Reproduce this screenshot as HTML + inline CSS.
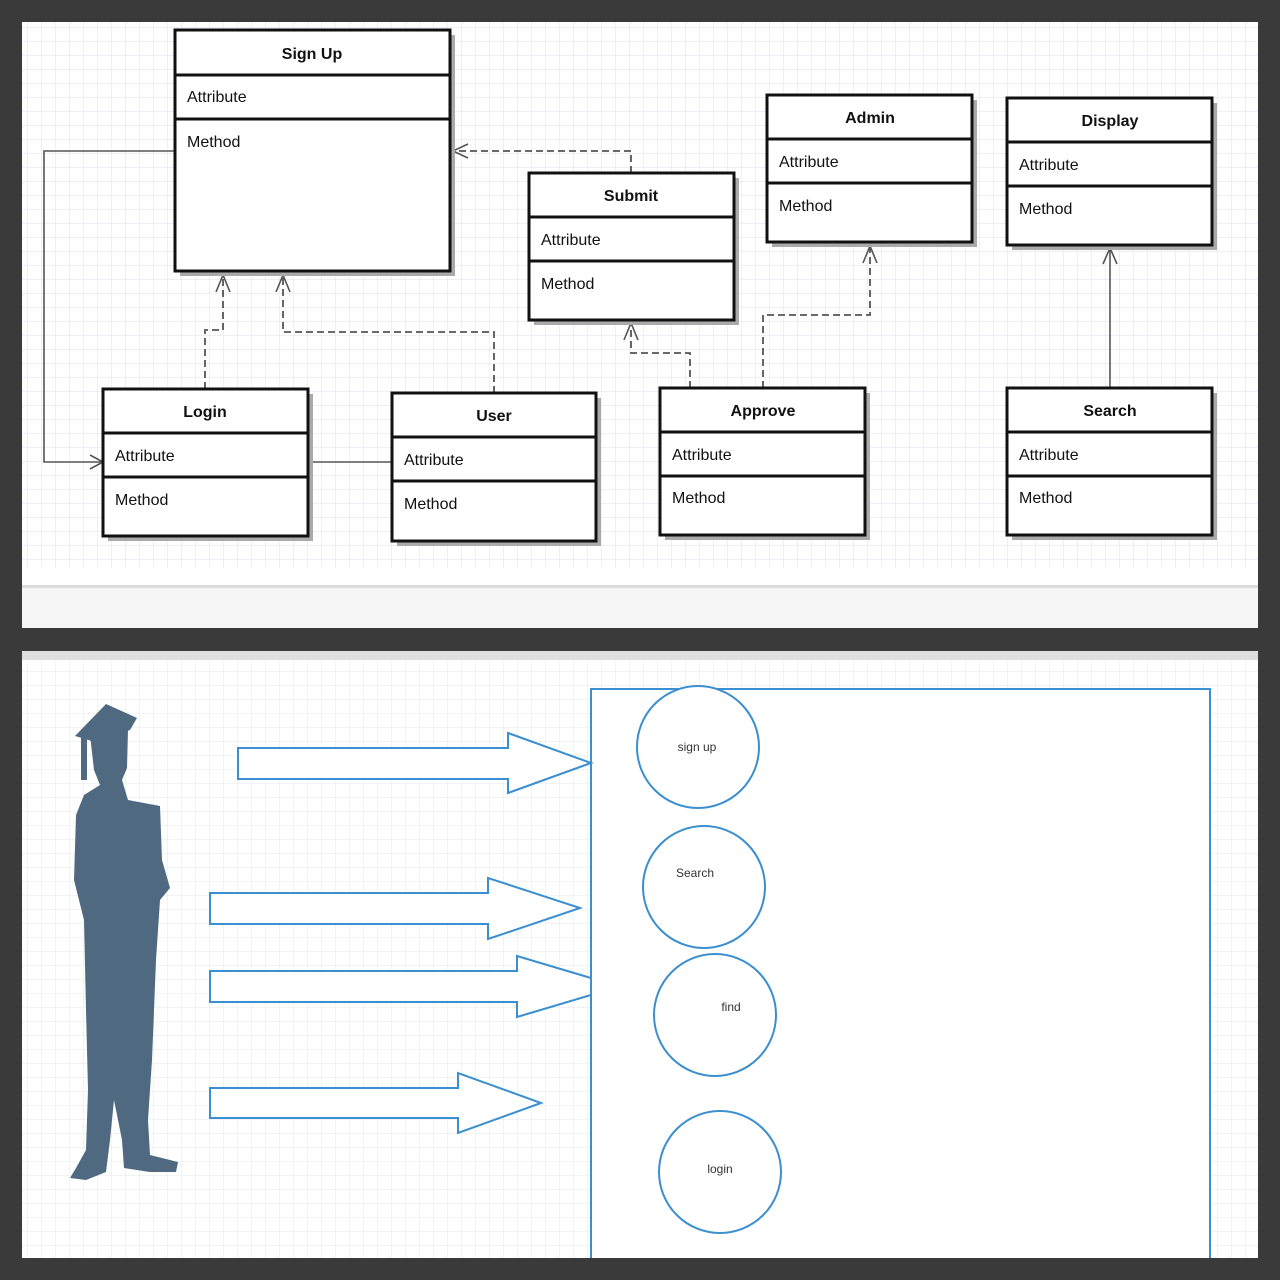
<!DOCTYPE html>
<html><head><meta charset="utf-8"><style>
html,body{margin:0;padding:0;background:#3a3a3a;}
svg{display:block;}
text{font-family:"Liberation Sans",sans-serif;}
</style></head><body>
<svg width="1280" height="1280" viewBox="0 0 1280 1280" xmlns="http://www.w3.org/2000/svg">
<defs>
<pattern id="g" width="14" height="14" patternUnits="userSpaceOnUse">
<rect width="14" height="14" fill="#fff"/>
<path d="M14 0V14M0 14H14" stroke="#dde1f0" stroke-width="1"/>
</pattern>
<pattern id="g2" width="14" height="14" patternUnits="userSpaceOnUse">
<rect width="14" height="14" fill="#fff"/>
<path d="M14 0V14M0 14H14" stroke="#e4e7ec" stroke-width="1"/>
</pattern>
<clipPath id="bp"><rect x="22" y="651" width="1236" height="607"/></clipPath>
</defs>
<rect width="1280" height="1280" fill="#3a3a3a"/>
<rect x="22" y="22" width="1236" height="606" fill="#fff"/>
<rect x="22" y="22" width="1236" height="546" fill="url(#g)"/>
<rect x="22" y="585" width="1236" height="3" fill="#dcdcdc"/>
<rect x="22" y="588" width="1236" height="40" fill="#f6f6f6"/>
<rect x="22" y="651" width="1236" height="607" fill="url(#g2)"/>
<rect x="22" y="651" width="1236" height="9" fill="#dedede"/>

<g fill="none" stroke="#555" stroke-width="1.6">
<path d="M175 151H44V462H103"/>
<path d="M90 455L103 462L90 469"/>
<path d="M308 462H392"/>
<path d="M1110 388V246"/>
<path d="M1103 264L1110 248L1117 264"/>
</g>
<g fill="none" stroke="#555" stroke-width="1.8" stroke-dasharray="7,4">
<path d="M631 173V151H453"/>
<path d="M205 389V330H223V274"/>
<path d="M494 393V332H283V274"/>
<path d="M690 388V353H631V322"/>
<path d="M763 388V315H870V245"/>
</g>
<g fill="none" stroke="#555" stroke-width="1.6">
<path d="M468 144L453 151L468 158"/>
<path d="M216 292L223 275L230 292"/>
<path d="M276 292L283 275L290 292"/>
<path d="M624 340L631 323L638 340"/>
<path d="M863 263L870 246L877 263"/>
</g>

<g fill="#aaa">
<rect x="180" y="35" width="275" height="241"/>
<rect x="534" y="178" width="205" height="147"/>
<rect x="772" y="100" width="205" height="147"/>
<rect x="1012" y="103" width="205" height="147"/>
<rect x="108" y="394" width="205" height="147"/>
<rect x="397" y="398" width="204" height="148"/>
<rect x="665" y="393" width="205" height="147"/>
<rect x="1012" y="393" width="205" height="147"/>
</g>
<g stroke="#111" stroke-width="3" fill="#fff">
<rect x="175" y="30" width="275" height="241"/><path d="M175 75H450M175 119H450"/>
<rect x="529" y="173" width="205" height="147"/><path d="M529 217H734M529 261H734"/>
<rect x="767" y="95" width="205" height="147"/><path d="M767 139H972M767 183H972"/>
<rect x="1007" y="98" width="205" height="147"/><path d="M1007 142H1212M1007 186H1212"/>
<rect x="103" y="389" width="205" height="147"/><path d="M103 433H308M103 477H308"/>
<rect x="392" y="393" width="204" height="148"/><path d="M392 437H596M392 481H596"/>
<rect x="660" y="388" width="205" height="147"/><path d="M660 432H865M660 476H865"/>
<rect x="1007" y="388" width="205" height="147"/><path d="M1007 432H1212M1007 476H1212"/>
</g>
<g font-size="16" font-weight="bold" fill="#111" text-anchor="middle">
<text x="312" y="59">Sign Up</text>
<text x="631" y="201">Submit</text>
<text x="870" y="123">Admin</text>
<text x="1110" y="126">Display</text>
<text x="205" y="417">Login</text>
<text x="494" y="421">User</text>
<text x="763" y="416">Approve</text>
<text x="1110" y="416">Search</text>
</g>
<g font-size="16" fill="#111">
<text x="187" y="102">Attribute</text><text x="187" y="147">Method</text>
<text x="541" y="245">Attribute</text><text x="541" y="289">Method</text>
<text x="779" y="167">Attribute</text><text x="779" y="211">Method</text>
<text x="1019" y="170">Attribute</text><text x="1019" y="214">Method</text>
<text x="115" y="461">Attribute</text><text x="115" y="505">Method</text>
<text x="404" y="465">Attribute</text><text x="404" y="509">Method</text>
<text x="672" y="460">Attribute</text><text x="672" y="503">Method</text>
<text x="1019" y="460">Attribute</text><text x="1019" y="503">Method</text>
</g>

<g clip-path="url(#bp)">
<rect x="591" y="689" width="619" height="600" fill="#fff" stroke="#3b8fd0" stroke-width="2"/>
<g fill="#fff" stroke="#3b8fd0" stroke-width="2">
<circle cx="698" cy="747" r="61"/>
<circle cx="704" cy="887" r="61"/>
<circle cx="715" cy="1015" r="61"/>
<circle cx="720" cy="1172" r="61"/>
<path d="M238 748H508V733L591 763L508 793V779H238Z"/>
<path d="M210 893H488V878L580 908L488 939V924H210Z"/>
<path d="M210 971H517V956L591 978L591 995L517 1017V1002H210Z"/>
<path d="M210 1088H458V1073L541 1103L458 1133V1118H210Z"/>
</g>
</g>
<g font-size="12" fill="#333" text-anchor="middle">
<text x="697" y="751">sign up</text>
<text x="695" y="877">Search</text>
<text x="731" y="1011">find</text>
<text x="720" y="1173">login</text>
</g>
<g fill="#4f6a80">
<path d="M75 736L106 704L137 718L130 730L95 742Z"/>
<rect x="81" y="738" width="6" height="42"/>
<path d="M90 735L128 730L127 768L122 780L128 800L160 806L162 860L170 888L160 900L156 960L152 1060L148 1120L150 1155L178 1162L176 1172L150 1172L124 1168L122 1140L114 1100L110 1140L106 1172L86 1180L70 1178L76 1168L86 1150L88 1090L86 1010L84 920L74 880L76 815L84 795L100 785L94 770Z"/>
</g>
</svg>
</body></html>
